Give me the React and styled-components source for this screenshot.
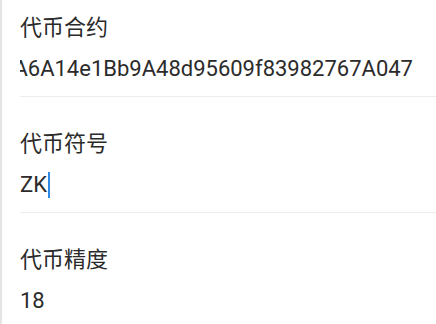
import React from 'react';
import styled, { createGlobalStyle } from 'styled-components';

const GlobalStyle = createGlobalStyle`
  html, body {
    margin: 0;
    padding: 0;
    background: #ffffff;
  }
  body {
    font-family: Roboto, "Noto Sans CJK SC", sans-serif;
    -webkit-font-smoothing: antialiased;
  }
`;

const Page = styled.div`
  height: 324px;
  overflow: hidden;
  background: #ffffff;
  border-left: 2px solid #e4e4e4;
  box-sizing: border-box;
`;

const Field = styled.div`
  margin-left: 18px;
  padding-top: ${props => (props.$first ? '10px' : '29px')};
  padding-bottom: 12px;
  border-bottom: 1px solid ${props => (props.$last ? 'transparent' : '#ececec')};
`;

const Label = styled.div`
  font-family: "Noto Sans CJK SC", sans-serif;
  font-size: 22px;
  line-height: 30px;
  color: #2b2b2b;
`;

const Value = styled.div`
  margin-top: 14px;
  margin-right: 23px;
  display: flex;
  justify-content: ${props => (props.$scrolled ? 'flex-end' : 'flex-start')};
  overflow: hidden;
  white-space: nowrap;
  font-family: Roboto, sans-serif;
  font-size: 22px;
  line-height: 30px;
  color: #2b2b2b;
`;

const Caret = styled.span`
  display: inline-block;
  width: 2px;
  height: 26px;
  margin-top: 2px;
  margin-left: 1px;
  background: #2f8ae5;
`;

const fields = [
  { label: '代币合约', value: 'A6A14e1Bb9A48d95609f83982767A047', scrolled: true },
  { label: '代币符号', value: 'ZK', focused: true },
  { label: '代币精度', value: '18' },
];

const App = () => (
  <>
    <GlobalStyle />
    <Page>
      {fields.map((f, i) => (
        <Field key={f.label} $first={i === 0} $last={i === fields.length - 1}>
          <Label>{f.label}</Label>
          <Value $scrolled={f.scrolled}>
            <span>{f.value}</span>
            {f.focused && <Caret />}
          </Value>
        </Field>
      ))}
    </Page>
  </>
);

export default App;
